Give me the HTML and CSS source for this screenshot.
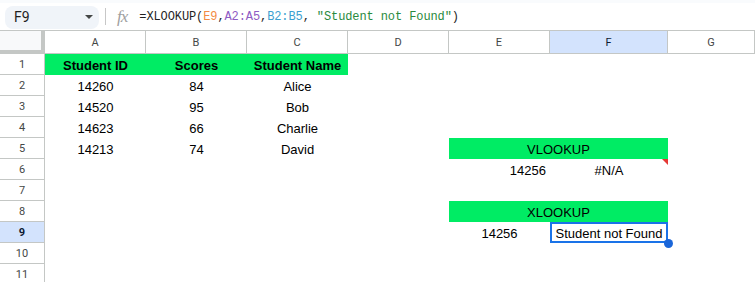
FILE: index.html
```html
<!DOCTYPE html>
<html lang="en">
<head>
  <meta charset="UTF-8" />
  <title>XLOOKUP sheet</title>
  <link rel="stylesheet" href="styles.css">
</head>
<body>
  <div class="toolbar">
    <div class="name-box">
      <span>F9</span>
      <span class="caret"></span>
    </div>
    <div class="sep"></div>
    <span class="fx">fx</span>
    <div class="formula">=XLOOKUP(<span class="ref-e">E9</span>,<span class="ref-a">A2:A5</span>,<span class="ref-b">B2:B5</span>, <span class="str">"Student not Found"</span>)</div>
  </div>

  <div class="sheet">
    <div class="corner"></div>
    <div class="col-head">A</div>
    <div class="col-head">B</div>
    <div class="col-head">C</div>
    <div class="col-head">D</div>
    <div class="col-head">E</div>
    <div class="col-head active">F</div>
    <div class="col-head">G</div>

    <div class="row-head">1</div>
    <div class="cell green bold">Student ID</div>
    <div class="cell green bold">Scores</div>
    <div class="cell green bold">Student Name</div>
    <div class="cell"></div><div class="cell"></div><div class="cell"></div><div class="cell"></div>

    <div class="row-head">2</div>
    <div class="cell">14260</div><div class="cell">84</div><div class="cell">Alice</div>
    <div class="cell"></div><div class="cell"></div><div class="cell"></div><div class="cell"></div>

    <div class="row-head">3</div>
    <div class="cell">14520</div><div class="cell">95</div><div class="cell">Bob</div>
    <div class="cell"></div><div class="cell"></div><div class="cell"></div><div class="cell"></div>

    <div class="row-head">4</div>
    <div class="cell">14623</div><div class="cell">66</div><div class="cell">Charlie</div>
    <div class="cell"></div><div class="cell"></div><div class="cell"></div><div class="cell"></div>

    <div class="row-head">5</div>
    <div class="cell">14213</div><div class="cell">74</div><div class="cell">David</div>
    <div class="cell"></div>
    <div class="cell green merged">VLOOKUP</div>
    <div class="cell"></div>

    <div class="row-head">6</div>
    <div class="cell"></div><div class="cell"></div><div class="cell"></div><div class="cell"></div>
    <div class="cell right">14256</div>
    <div class="cell error">#N/A<span class="err-mark"></span></div>
    <div class="cell"></div>

    <div class="row-head">7</div>
    <div class="cell"></div><div class="cell"></div><div class="cell"></div><div class="cell"></div>
    <div class="cell"></div><div class="cell"></div><div class="cell"></div>

    <div class="row-head">8</div>
    <div class="cell"></div><div class="cell"></div><div class="cell"></div><div class="cell"></div>
    <div class="cell green merged">XLOOKUP</div>
    <div class="cell"></div>

    <div class="row-head active">9</div>
    <div class="cell"></div><div class="cell"></div><div class="cell"></div><div class="cell"></div>
    <div class="cell">14256</div>
    <div class="cell selected">Student not Found<span class="handle"></span></div>
    <div class="cell"></div>

    <div class="row-head">10</div>
    <div class="cell"></div><div class="cell"></div><div class="cell"></div><div class="cell"></div>
    <div class="cell"></div><div class="cell"></div><div class="cell"></div>

    <div class="row-head">11</div>
    <div class="cell"></div><div class="cell"></div><div class="cell"></div><div class="cell"></div>
    <div class="cell"></div><div class="cell"></div><div class="cell"></div>
  </div>
</body>
</html>
```

FILE: styles.css
```css
body {
  margin: 0;
  background: #fff;
  font-family: "Liberation Sans", Arial, sans-serif;
  overflow: hidden;
}

.toolbar {
  height: 31px;
  box-sizing: border-box;
  border-top: 3px solid #f9fbfd;
  border-bottom: 1px solid #c4c7c5;
  display: flex;
  align-items: center;
  padding-left: 5px;
}

.name-box {
  width: 94px;
  height: 23px;
  box-sizing: border-box;
  background: #f0f4f9;
  border-radius: 8px;
  display: flex;
  align-items: center;
  justify-content: space-between;
  padding: 0 6px 0 9px;
  font-family: Roboto, "Liberation Sans", sans-serif;
  font-size: 14px;
  color: #1f1f1f;
  margin-top: 1px;
}

.caret {
  width: 0;
  height: 0;
  border-left: 4px solid transparent;
  border-right: 4px solid transparent;
  border-top: 4px solid #444746;
}

.sep {
  width: 1px;
  height: 17px;
  background: #c7c7c7;
  margin-left: 6px;
}

.fx {
  font-family: "Liberation Serif", serif;
  font-style: italic;
  font-size: 17px;
  color: #a0a0a0;
  margin-left: 11px;
  letter-spacing: -1px;
}

.formula {
  font-family: "Liberation Mono", monospace;
  font-size: 12px;
  color: #1f1f1f;
  margin-left: 12px;
  letter-spacing: -0.1px;
  white-space: pre;
}

.ref-e { color: #f28b45; }
.ref-a { color: #8e5bc4; }
.ref-b { color: #3c9fd0; }
.str { color: #2a8a3e; }

.sheet {
  display: grid;
  grid-template-columns: 45px 101px 101px 101px 101px 101px 118px 1fr;
  grid-template-rows: 23px repeat(11, 21px);
  font-size: 13px;
  color: #000;
}

.corner {
  background: #f8f9fa;
  border-right: 4px solid #c4c7c5;
  border-bottom: 4px solid #c4c7c5;
}

.col-head,
.row-head {
  display: flex;
  align-items: center;
  justify-content: center;
  font-family: Roboto, "Liberation Sans", sans-serif;
  font-size: 11px;
  color: #444746;
  box-sizing: border-box;
}

.col-head {
  border-right: 1px solid #c4c7c5;
  border-bottom: 1px solid #c4c7c5;
  padding-top: 1px;
}

.row-head {
  border-right: 1px solid #c4c7c5;
  border-bottom: 1px solid #c4c7c5;
}

.col-head.active,
.row-head.active {
  background: #d3e3fd;
  color: #0e1a33;
}

.row-head.active {
  font-weight: bold;
}

.cell {
  display: flex;
  align-items: center;
  justify-content: center;
  position: relative;
  white-space: nowrap;
  padding-top: 1px;
  box-sizing: border-box;
}

.cell.right {
  justify-content: flex-end;
  padding-right: 4px;
}

.green {
  background: #00ec64;
}

.bold {
  font-weight: bold;
}

.merged {
  grid-column: span 2;
}

.err-mark {
  position: absolute;
  top: 0;
  right: 0;
  width: 0;
  height: 0;
  border-top: 6px solid #e53935;
  border-left: 6px solid transparent;
}

.selected {
  box-shadow: inset 0 0 0 2px #1a73e8;
  overflow: visible;
}

.handle {
  position: absolute;
  right: -5px;
  bottom: -5px;
  width: 9px;
  height: 9px;
  border-radius: 50%;
  background: #1a66d9;
  z-index: 2;
}
```
